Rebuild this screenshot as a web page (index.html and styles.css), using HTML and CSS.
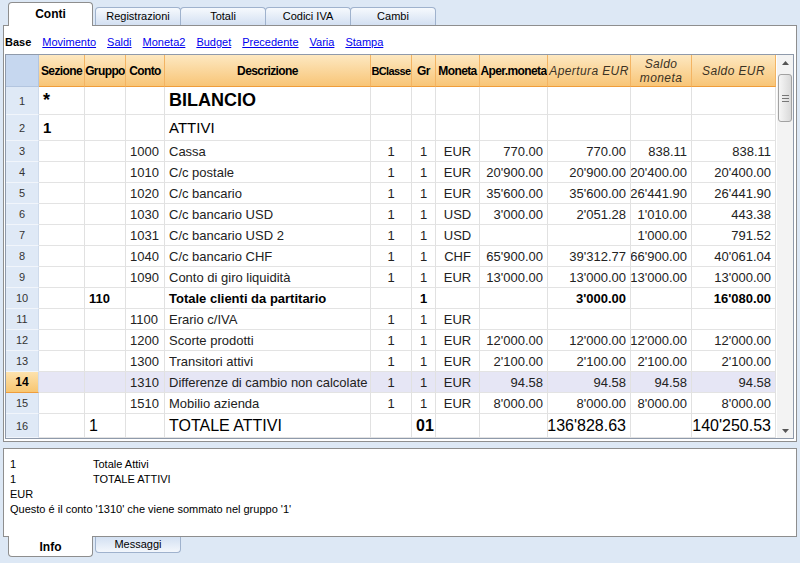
FILE: index.html
```html
<!DOCTYPE html>
<html>
<head>
  <meta charset="UTF-8">
  <link rel="stylesheet" href="styles.css">
</head>
<body>

  <!-- Table tabs -->
  <div class="tabs top">
    <div class="tab active">Conti</div>
    <div class="tab">Registrazioni</div>
    <div class="tab">Totali</div>
    <div class="tab">Codici IVA</div>
    <div class="tab">Cambi</div>
  </div>

  <div class="panel">
    <!-- Column views -->
    <div class="views">
      <b>Base</b>
      <a href="#">Movimento</a>
      <a href="#">Saldi</a>
      <a href="#">Moneta2</a>
      <a href="#">Budget</a>
      <a href="#">Precedente</a>
      <a href="#">Varia</a>
      <a href="#">Stampa</a>
    </div>

    <div class="sheet">
      <div class="grid">
        <div class="row head">
          <div class="cell corner"></div>
          <div class="cell">Sezione</div>
          <div class="cell">Gruppo</div>
          <div class="cell">Conto</div>
          <div class="cell">Descrizione</div>
          <div class="cell small">BClasse</div>
          <div class="cell">Gr</div>
          <div class="cell">Moneta</div>
          <div class="cell">Aper.moneta</div>
          <div class="cell it">Apertura EUR</div>
          <div class="cell it">Saldo<br>moneta</div>
          <div class="cell it">Saldo EUR</div>
        </div>

        <div class="row r1">
          <div class="cell rh">1</div>
          <div class="cell b big">*</div><div class="cell"></div><div class="cell"></div>
          <div class="cell b big">BILANCIO</div>
          <div class="cell"></div><div class="cell"></div><div class="cell"></div>
          <div class="cell"></div><div class="cell"></div><div class="cell"></div><div class="cell"></div>
        </div>

        <div class="row r2">
          <div class="cell rh">2</div>
          <div class="cell b mid">1</div><div class="cell"></div><div class="cell"></div>
          <div class="cell mid">ATTIVI</div>
          <div class="cell"></div><div class="cell"></div><div class="cell"></div>
          <div class="cell"></div><div class="cell"></div><div class="cell"></div><div class="cell"></div>
        </div>

        <div class="row">
          <div class="cell rh">3</div>
          <div class="cell"></div><div class="cell"></div>
          <div class="cell">1000</div><div class="cell">Cassa</div>
          <div class="cell c">1</div><div class="cell c">1</div><div class="cell c">EUR</div>
          <div class="cell n">770.00</div><div class="cell n">770.00</div><div class="cell n">838.11</div><div class="cell n">838.11</div>
        </div>

        <div class="row">
          <div class="cell rh">4</div>
          <div class="cell"></div><div class="cell"></div>
          <div class="cell">1010</div><div class="cell">C/c postale</div>
          <div class="cell c">1</div><div class="cell c">1</div><div class="cell c">EUR</div>
          <div class="cell n">20'900.00</div><div class="cell n">20'900.00</div><div class="cell n">20'400.00</div><div class="cell n">20'400.00</div>
        </div>

        <div class="row">
          <div class="cell rh">5</div>
          <div class="cell"></div><div class="cell"></div>
          <div class="cell">1020</div><div class="cell">C/c bancario</div>
          <div class="cell c">1</div><div class="cell c">1</div><div class="cell c">EUR</div>
          <div class="cell n">35'600.00</div><div class="cell n">35'600.00</div><div class="cell n">26'441.90</div><div class="cell n">26'441.90</div>
        </div>

        <div class="row">
          <div class="cell rh">6</div>
          <div class="cell"></div><div class="cell"></div>
          <div class="cell">1030</div><div class="cell">C/c bancario USD</div>
          <div class="cell c">1</div><div class="cell c">1</div><div class="cell c">USD</div>
          <div class="cell n">3'000.00</div><div class="cell n">2'051.28</div><div class="cell n">1'010.00</div><div class="cell n">443.38</div>
        </div>

        <div class="row">
          <div class="cell rh">7</div>
          <div class="cell"></div><div class="cell"></div>
          <div class="cell">1031</div><div class="cell">C/c bancario USD 2</div>
          <div class="cell c">1</div><div class="cell c">1</div><div class="cell c">USD</div>
          <div class="cell n"></div><div class="cell n"></div><div class="cell n">1'000.00</div><div class="cell n">791.52</div>
        </div>

        <div class="row">
          <div class="cell rh">8</div>
          <div class="cell"></div><div class="cell"></div>
          <div class="cell">1040</div><div class="cell">C/c bancario CHF</div>
          <div class="cell c">1</div><div class="cell c">1</div><div class="cell c">CHF</div>
          <div class="cell n">65'900.00</div><div class="cell n">39'312.77</div><div class="cell n">66'900.00</div><div class="cell n">40'061.04</div>
        </div>

        <div class="row">
          <div class="cell rh">9</div>
          <div class="cell"></div><div class="cell"></div>
          <div class="cell">1090</div><div class="cell">Conto di giro liquidità</div>
          <div class="cell c">1</div><div class="cell c">1</div><div class="cell c">EUR</div>
          <div class="cell n">13'000.00</div><div class="cell n">13'000.00</div><div class="cell n">13'000.00</div><div class="cell n">13'000.00</div>
        </div>

        <div class="row">
          <div class="cell rh">10</div>
          <div class="cell"></div><div class="cell b">110</div>
          <div class="cell"></div><div class="cell b">Totale clienti da partitario</div>
          <div class="cell c"></div><div class="cell c b">1</div><div class="cell c"></div>
          <div class="cell n"></div><div class="cell n b">3'000.00</div><div class="cell n"></div><div class="cell n b">16'080.00</div>
        </div>

        <div class="row">
          <div class="cell rh">11</div>
          <div class="cell"></div><div class="cell"></div>
          <div class="cell">1100</div><div class="cell">Erario c/IVA</div>
          <div class="cell c">1</div><div class="cell c">1</div><div class="cell c">EUR</div>
          <div class="cell n"></div><div class="cell n"></div><div class="cell n"></div><div class="cell n"></div>
        </div>

        <div class="row">
          <div class="cell rh">12</div>
          <div class="cell"></div><div class="cell"></div>
          <div class="cell">1200</div><div class="cell">Scorte prodotti</div>
          <div class="cell c">1</div><div class="cell c">1</div><div class="cell c">EUR</div>
          <div class="cell n">12'000.00</div><div class="cell n">12'000.00</div><div class="cell n">12'000.00</div><div class="cell n">12'000.00</div>
        </div>

        <div class="row">
          <div class="cell rh">13</div>
          <div class="cell"></div><div class="cell"></div>
          <div class="cell">1300</div><div class="cell">Transitori attivi</div>
          <div class="cell c">1</div><div class="cell c">1</div><div class="cell c">EUR</div>
          <div class="cell n">2'100.00</div><div class="cell n">2'100.00</div><div class="cell n">2'100.00</div><div class="cell n">2'100.00</div>
        </div>

        <div class="row current">
          <div class="cell rh">14</div>
          <div class="cell"></div><div class="cell"></div>
          <div class="cell">1310</div><div class="cell">Differenze di cambio non calcolate</div>
          <div class="cell c">1</div><div class="cell c">1</div><div class="cell c">EUR</div>
          <div class="cell n">94.58</div><div class="cell n">94.58</div><div class="cell n">94.58</div><div class="cell n">94.58</div>
        </div>

        <div class="row">
          <div class="cell rh">15</div>
          <div class="cell"></div><div class="cell"></div>
          <div class="cell">1510</div><div class="cell">Mobilio azienda</div>
          <div class="cell c">1</div><div class="cell c">1</div><div class="cell c">EUR</div>
          <div class="cell n">8'000.00</div><div class="cell n">8'000.00</div><div class="cell n">8'000.00</div><div class="cell n">8'000.00</div>
        </div>

        <div class="row r16">
          <div class="cell rh">16</div>
          <div class="cell"></div><div class="cell tot">1</div>
          <div class="cell"></div><div class="cell tot">TOTALE ATTIVI</div>
          <div class="cell"></div><div class="cell tot b">01</div><div class="cell"></div>
          <div class="cell n"></div><div class="cell n tot">136'828.63</div><div class="cell n"></div><div class="cell n tot">140'250.53</div>
        </div>
      </div>

      <!-- Vertical scrollbar -->
      <div class="scrollbar">
        <div class="arrow"><svg width="7" height="4" viewBox="0 0 7 4"><path d="M0 4 L3.5 0 L7 4 Z" fill="#555"/></svg></div>
        <div class="thumb"><span></span><span></span><span></span></div>
        <div class="track"></div>
        <div class="arrow"><svg width="7" height="4" viewBox="0 0 7 4"><path d="M0 0 L3.5 4 L7 0 Z" fill="#555"/></svg></div>
      </div>
    </div>
  </div>

  <!-- Info about the current row -->
  <div class="info">
    <div class="line"><span>1</span><span>Totale Attivi</span></div>
    <div class="line"><span>1</span><span>TOTALE ATTIVI</span></div>
    <div class="line"><span>EUR</span><span></span></div>
    <div class="msg">Questo é il conto '1310' che viene sommato nel gruppo '1'</div>
  </div>

  <div class="tabs bottom">
    <div class="tab active">Info</div>
    <div class="tab">Messaggi</div>
  </div>

</body>
</html>
```

FILE: styles.css
```css
body { margin: 0; width: 800px; height: 563px; overflow: hidden; background: #dde8f5; font-family: "Liberation Sans", Arial, sans-serif; color: #000; }

/* tabs */
.tabs { display: flex; padding-left: 8px; }
.tabs.top { height: 25px; align-items: flex-end; }
.tabs.bottom { align-items: flex-start; }
.tab { box-sizing: border-box; width: 86px; margin-right: -1px; font-size: 11px; text-align: center; border: 1px solid #9fb2cd; background: linear-gradient(#f6f9fd, #d3e0f2); }
.top .tab { height: 18px; line-height: 17px; border-bottom: none; border-radius: 4px 4px 0 0; }
.bottom .tab { height: 16px; line-height: 14px; border-top: none; border-radius: 0 0 4px 4px; background: linear-gradient(#d3e0f2, #f3f7fc); }
.tab.active { position: relative; z-index: 1; width: 85px; margin-right: 2px; background: #fff; border-color: #8e8e8e; font-weight: bold; font-size: 12px; }
.top .tab.active { height: 24px; line-height: 23px; margin-bottom: -1px; }
.bottom .tab.active { height: 21px; line-height: 22px; margin-top: -1px; }

/* main panel */
.panel { box-sizing: border-box; height: 417px; margin: 0 3px; padding: 0 2px 2px 1px; background: #fff; border: 1px solid #8e8e8e; }
.views { display: flex; gap: 11px; height: 28px; box-sizing: border-box; padding-top: 10px; font-size: 11px; line-height: 13px; }
.views a { color: #0000ee; }

.sheet { display: flex; height: 385px; box-sizing: border-box; border: 1px solid #8f9aab; }
.grid { width: 770px; }
.row { display: grid; grid-template-columns: 33px 46px 41px 39px 206px 41px 24px 44px 68px 83px 61px 84px; height: 21px; }
.row.head { height: 32px; }
.row.r1 { height: 28px; }
.row.r2 { height: 26px; }
.row.r16 { height: 24px; }

.cell { box-sizing: border-box; display: flex; align-items: center; padding: 0 4px; overflow: hidden; white-space: nowrap; font-size: 13px; color: #222; border-right: 1px solid #e1e1e1; border-bottom: 1px solid #e3e3e3; }
.cell.c { justify-content: center; padding: 0; }
.cell.n { justify-content: flex-end; }
.cell.b { font-weight: bold; color: #000; }
.cell.big { font-size: 18px; }
.cell.mid { font-size: 15px; color: #000; }
.cell.tot { font-size: 16px; color: #000; }

/* column headers */
.head .cell { justify-content: center; padding: 0; font-size: 12px; font-weight: bold; letter-spacing: -0.6px; color: #000; background: linear-gradient(#fde8c1, #f8c577); border-right: 1px solid #f3b463; border-bottom: 1px solid #ef9d3b; }
.head .cell.small { font-size: 11px; }
.head .cell.corner { background: #c6d7ef; border-right-color: #b3c5df; border-bottom-color: #b3c5df; }
.head .cell.it { font-style: italic; font-weight: normal; letter-spacing: 0.4px; color: #3b3224; text-align: center; line-height: 14px; white-space: normal; }

/* row numbers */
.cell.rh { justify-content: center; padding: 0; font-size: 11px; color: #333; background: #dfe9f6; border-right: 1px solid #cfdbeb; border-bottom: 1px solid #f1f5fb; }
.row.current .cell { background: #e6e6f5; }
.row.current .cell.rh { font-weight: bold; font-size: 12px; color: #000; background: linear-gradient(#fde2ad, #f8c671); border-bottom: 1px solid #ef9d3b; }

/* scrollbar */
.scrollbar { width: 17px; display: flex; flex-direction: column; background: #f3f3f3; border-left: 1px solid #fff; box-sizing: border-box; }
.arrow { height: 15px; display: flex; align-items: center; justify-content: center; }
.thumb { box-sizing: border-box; height: 48px; margin: 4px 1px 0 1px; border: 1px solid #a2a2a2; border-radius: 3px; background: linear-gradient(to right, #f6f6f6, #d9d9d9); display: flex; flex-direction: column; align-items: center; justify-content: center; gap: 2px; }
.thumb span { width: 7px; height: 1px; background: #777; }
.track { flex: 1; }

/* info panel */
.info { box-sizing: border-box; height: 89px; margin: 6px 3px 0; padding: 8px 0 0 6px; background: #fff; border: 1px solid #8e8e8e; font-size: 11px; line-height: 15px; }
.info .line { display: grid; grid-template-columns: 83px auto; }
```
